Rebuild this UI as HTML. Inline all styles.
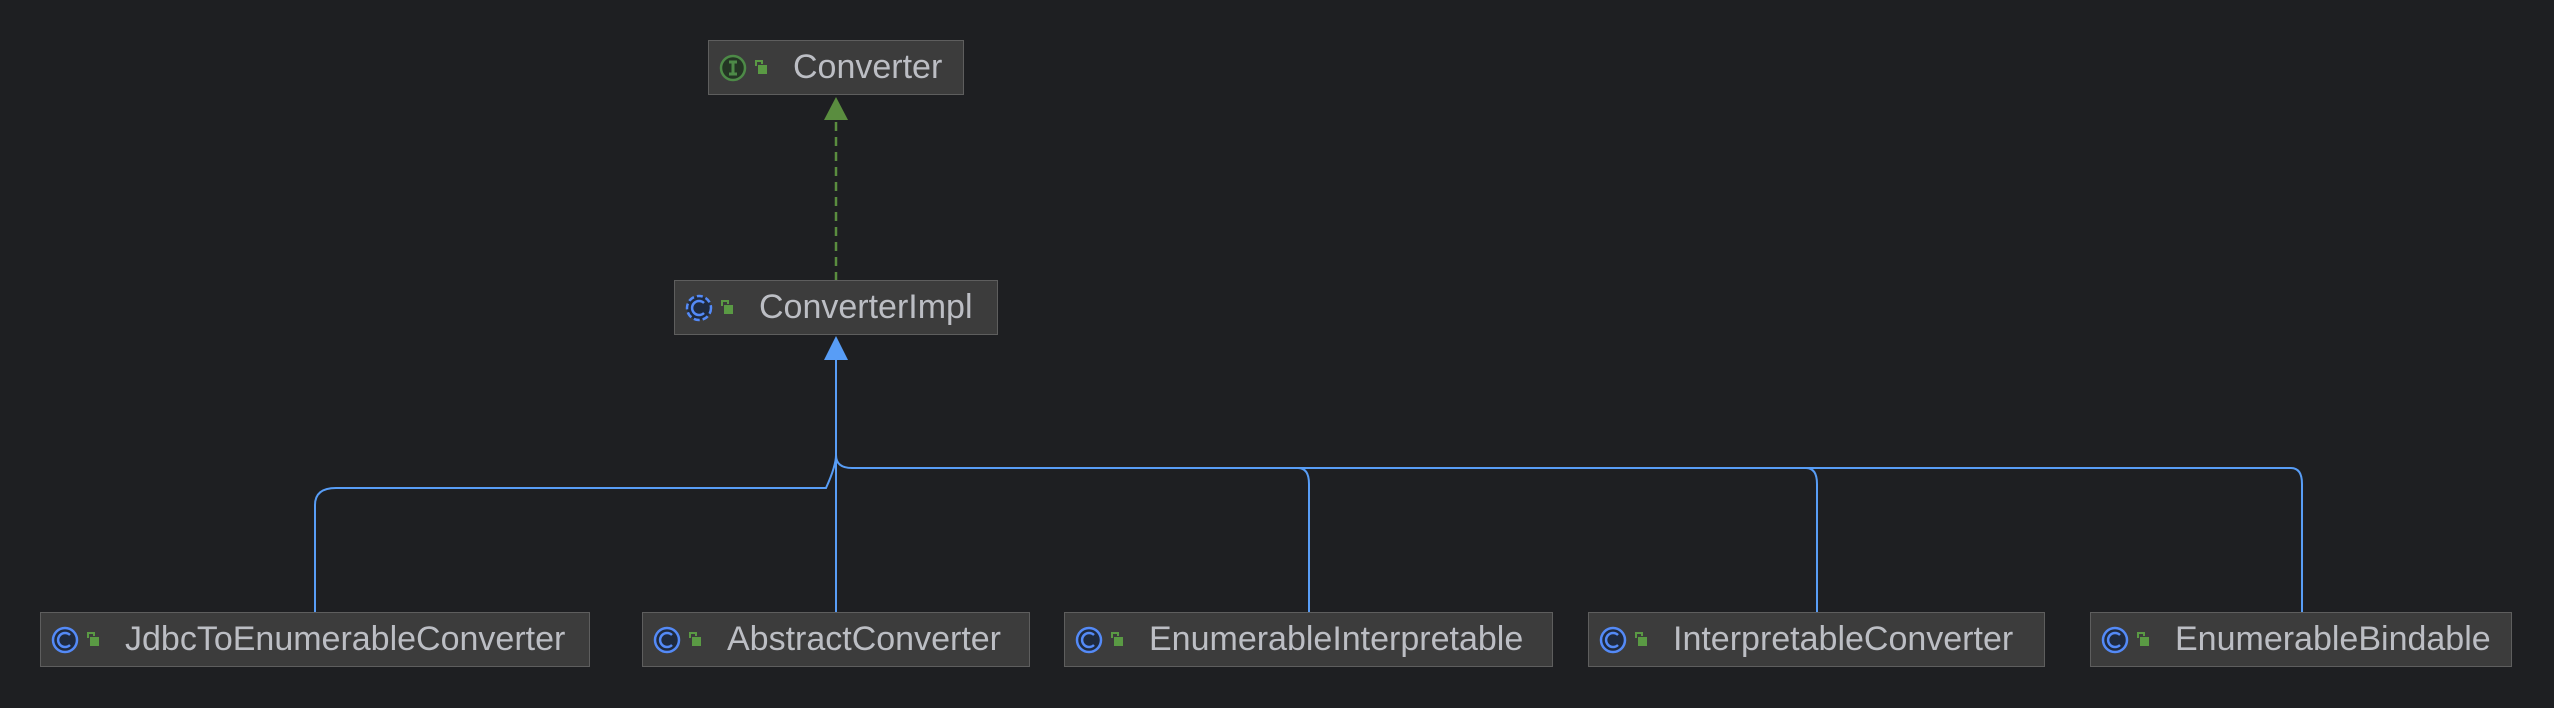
<!DOCTYPE html>
<html><head><meta charset="utf-8"><style>
html,body{margin:0;padding:0;background:#1e1f22;width:2554px;height:708px;overflow:hidden;position:relative;font-family:"Liberation Sans",sans-serif}
.b{position:absolute;height:53px;background:#3c3c3c;border:1px solid #5e5e5e;box-sizing:content-box}
.b svg{position:absolute;left:8px;top:11px}
.t{position:absolute;left:84px;top:0;line-height:53px;font-size:34px;color:#bcbec4;white-space:nowrap}
svg.l{position:absolute;left:0;top:0}
</style></head><body>
<svg class="l" width="2554" height="708">
<line x1="836" y1="122" x2="836" y2="280" stroke="#5a8d3f" stroke-width="2.5" stroke-dasharray="9,6"/>
<polygon points="836,97 824,120 848,120" fill="#5a8d3f"/>
<polygon points="836,336 824,360 848,360" fill="#589df6"/>
<g fill="none" stroke="#589df6" stroke-width="2">
<path d="M836,358 V612"/>
<path d="M836,455 Q836,466 826,488 H336 Q315,488 315,505 V612"/>
<path d="M836,455 Q836,468 852,468 H1298 Q1309,468 1309,484 V612"/>
<path d="M1298,468 H1806 Q1817,468 1817,484 V612"/>
<path d="M1806,468 H2291 Q2302,468 2302,484 V612"/>
</g>
</svg>
<div class="b" style="left:708px;top:40px;width:254px"><svg width="70" height="32"><circle cx="16" cy="16" r="12" fill="#243524" stroke="#4d8a47" stroke-width="2.5"/><path d="M12,10H20M12,22H20M16,10V22" stroke="#4d8a47" stroke-width="3"/><path d="M39,14V9H45V12" fill="none" stroke="#5a9a44" stroke-width="2"/><rect x="41" y="13" width="9" height="9" fill="#5a9a44"/></svg><span class="t">Converter</span></div>
<div class="b" style="left:674px;top:280px;width:322px"><svg width="70" height="32"><circle cx="16" cy="16" r="12" fill="#1f2a3e" stroke="#548af7" stroke-width="2.5" stroke-dasharray="6,3"/><path d="M21,11A7,7 0 1 0 21,21" fill="none" stroke="#548af7" stroke-width="2.5"/><path d="M39,14V9H45V12" fill="none" stroke="#5a9a44" stroke-width="2"/><rect x="41" y="13" width="9" height="9" fill="#5a9a44"/></svg><span class="t">ConverterImpl</span></div>
<div class="b" style="left:40px;top:612px;width:548px"><svg width="70" height="32"><circle cx="16" cy="16" r="12" fill="#1f2a3e" stroke="#548af7" stroke-width="2.5"/><path d="M21,11A7,7 0 1 0 21,21" fill="none" stroke="#548af7" stroke-width="2.5"/><path d="M39,14V9H45V12" fill="none" stroke="#5a9a44" stroke-width="2"/><rect x="41" y="13" width="9" height="9" fill="#5a9a44"/></svg><span class="t">JdbcToEnumerableConverter</span></div>
<div class="b" style="left:642px;top:612px;width:386px"><svg width="70" height="32"><circle cx="16" cy="16" r="12" fill="#1f2a3e" stroke="#548af7" stroke-width="2.5"/><path d="M21,11A7,7 0 1 0 21,21" fill="none" stroke="#548af7" stroke-width="2.5"/><path d="M39,14V9H45V12" fill="none" stroke="#5a9a44" stroke-width="2"/><rect x="41" y="13" width="9" height="9" fill="#5a9a44"/></svg><span class="t">AbstractConverter</span></div>
<div class="b" style="left:1064px;top:612px;width:487px"><svg width="70" height="32"><circle cx="16" cy="16" r="12" fill="#1f2a3e" stroke="#548af7" stroke-width="2.5"/><path d="M21,11A7,7 0 1 0 21,21" fill="none" stroke="#548af7" stroke-width="2.5"/><path d="M39,14V9H45V12" fill="none" stroke="#5a9a44" stroke-width="2"/><rect x="41" y="13" width="9" height="9" fill="#5a9a44"/></svg><span class="t">EnumerableInterpretable</span></div>
<div class="b" style="left:1588px;top:612px;width:455px"><svg width="70" height="32"><circle cx="16" cy="16" r="12" fill="#1f2a3e" stroke="#548af7" stroke-width="2.5"/><path d="M21,11A7,7 0 1 0 21,21" fill="none" stroke="#548af7" stroke-width="2.5"/><path d="M39,14V9H45V12" fill="none" stroke="#5a9a44" stroke-width="2"/><rect x="41" y="13" width="9" height="9" fill="#5a9a44"/></svg><span class="t">InterpretableConverter</span></div>
<div class="b" style="left:2090px;top:612px;width:420px"><svg width="70" height="32"><circle cx="16" cy="16" r="12" fill="#1f2a3e" stroke="#548af7" stroke-width="2.5"/><path d="M21,11A7,7 0 1 0 21,21" fill="none" stroke="#548af7" stroke-width="2.5"/><path d="M39,14V9H45V12" fill="none" stroke="#5a9a44" stroke-width="2"/><rect x="41" y="13" width="9" height="9" fill="#5a9a44"/></svg><span class="t">EnumerableBindable</span></div>
</body></html>
